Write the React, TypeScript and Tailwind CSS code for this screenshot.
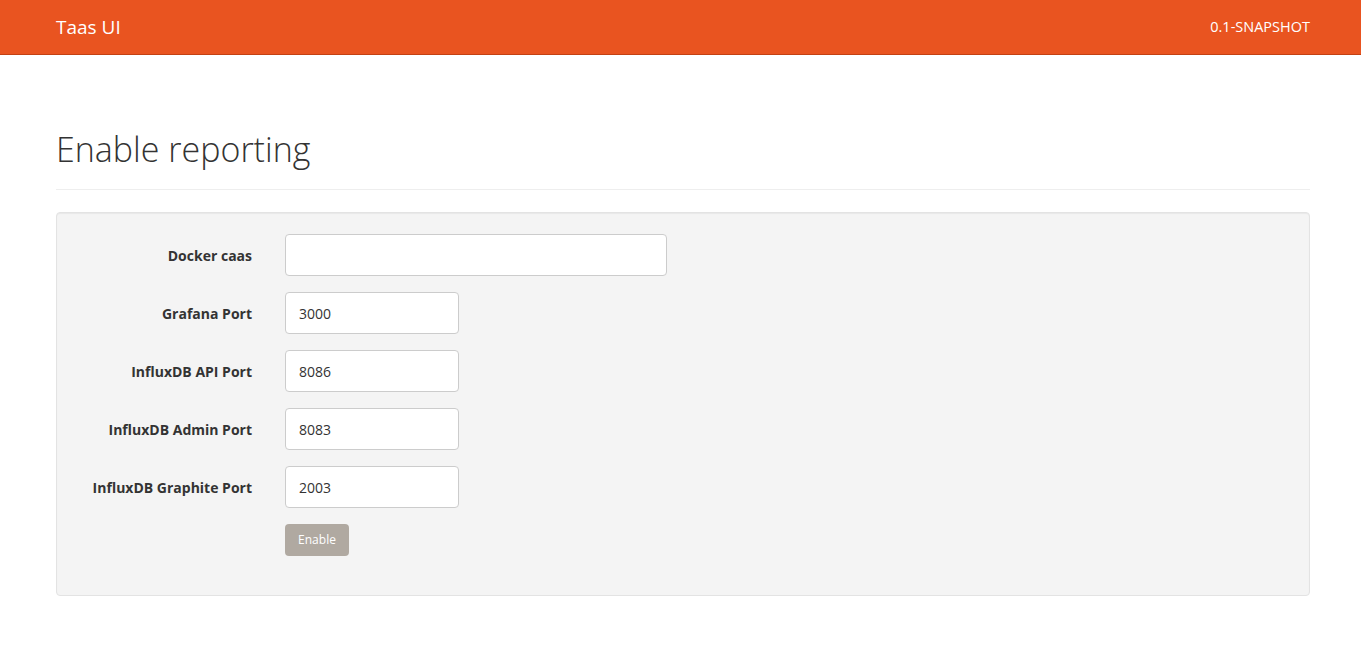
const fields = [
  { label: "Docker caas", value: "", wide: true },
  { label: "Grafana Port", value: "3000" },
  { label: "InfluxDB API Port", value: "8086" },
  { label: "InfluxDB Admin Port", value: "8083" },
  { label: "InfluxDB Graphite Port", value: "2003" },
];

export default function App() {
  return (
    <div className="min-h-[670px] bg-white text-[#333] font-['Open_Sans','Noto_Sans',sans-serif]">
      <nav className="h-[55px] bg-[#e95420] border-b border-[#c34113] flex items-center justify-between pl-[56px] pr-[51px]">
        <span className="text-[19px] text-white">Taas UI</span>
        <span className="text-[14.5px] text-white">0.1-SNAPSHOT</span>
      </nav>

      <main className="pl-[56px] pr-[51px]">
        <div className="pt-[74px] pb-[20px] border-b border-[#eee]">
          <h1 className="text-[34px] leading-[40px] font-light">Enable reporting</h1>
        </div>

        <form className="mt-[22px] bg-[#f4f4f4] border border-[#e3e3e3] rounded shadow-[inset_0_1px_1px_rgba(0,0,0,0.05)] pt-[21px] pb-[39px]">
          {fields.map((f) => (
            <div key={f.label} className="flex items-center mb-[16px] last:mb-[17px]">
              <label className="w-[195px] shrink-0 text-right text-[14px] font-bold">
                {f.label}
              </label>
              <input
                type="text"
                defaultValue={f.value}
                className={`ml-[33px] h-[42px] rounded bg-white border border-[#ccc] px-[13px] text-[14px] text-[#333] outline-none ${
                  f.wide ? "w-[382px]" : "w-[174px]"
                }`}
              />
            </div>
          ))}
          <div className="flex">
            <button
              type="button"
              className="ml-[228px] h-[32px] w-[64px] rounded bg-[#b0a9a1] text-white text-[12px]"
            >
              Enable
            </button>
          </div>
        </form>
      </main>
    </div>
  );
}
